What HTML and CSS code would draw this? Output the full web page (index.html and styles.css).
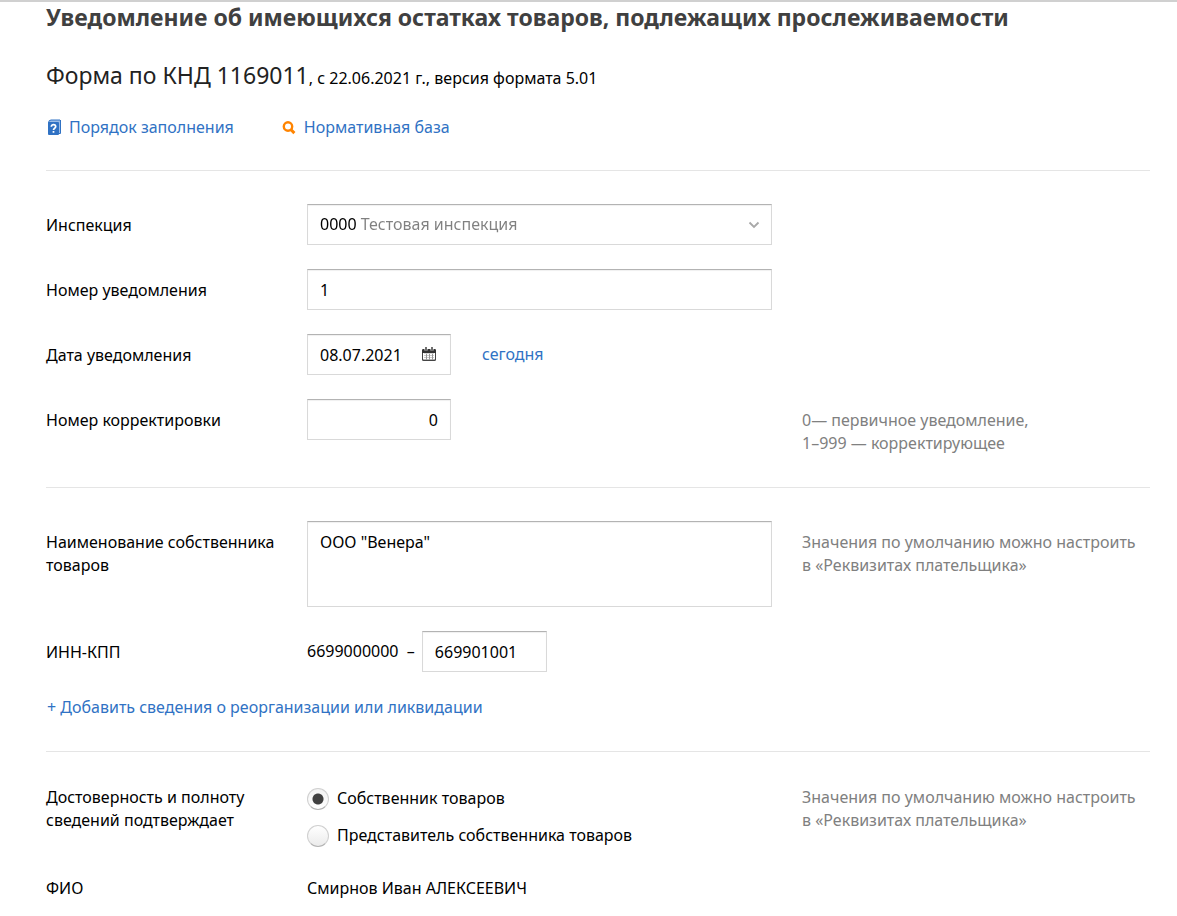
FILE: index.html
```html
<!DOCTYPE html>
<html lang="ru">
<head>
  <meta charset="utf-8">
  <title>Уведомление об остатках товаров</title>
  <link rel="stylesheet" href="styles.css">
</head>
<body>
  <main class="page">
    <header class="header">
      <h1>Уведомление об имеющихся остатках товаров, подлежащих прослеживаемости</h1>
      <p class="form-info"><span class="form-name">Форма по КНД 1169011</span>, с 22.06.2021 г., версия формата 5.01</p>
      <nav class="help-links">
        <a href="#">
          <svg width="16" height="18" viewBox="0 0 16 18">
            <path d="M4 1h11v13h-2V4H2.500z" fill="#9dbde6"/>
            <path d="M14.500 1v13.500h-1.500" fill="none" stroke="#3072c4"/>
            <rect x="2" y="3" width="11" height="13" rx="1" fill="#3072c4"/>
            <path d="M2.500 4Q2.500 1 5 1h9" fill="none" stroke="#3072c4"/>
            <path d="M5.300 7.800c0-2.800 4.400-2.800 4.400 0 0 1.500-2.200 1.500-2.200 3.200M7.500 12v1.800" fill="none" stroke="#fff" stroke-width="1.700"/>
          </svg>
          Порядок заполнения
        </a>
        <a href="#">
          <svg width="16" height="18" viewBox="0 0 16 18">
            <circle cx="7" cy="7.500" r="4.200" fill="none" stroke="#ff8400" stroke-width="2.400"/>
            <path d="M9.800 10.500l3.600 3.600" stroke="#ff8400" stroke-width="3"/>
          </svg>
          Нормативная база
        </a>
      </nav>
    </header>

    <form>
      <section class="section">
        <div class="row">
          <label class="label" for="inspection">Инспекция</label>
          <div class="field select-box">
            <select id="inspection">
              <option>0000 Тестовая инспекция</option>
            </select>
            <svg class="arrow" width="12" height="8" viewBox="0 0 12 8">
              <path d="M1.500 1.500L6 6l4.500-4.500" fill="none" stroke="#a8a8a8" stroke-width="1.800"/>
            </svg>
          </div>
        </div>
        <div class="row">
          <label class="label" for="number">Номер уведомления</label>
          <div class="field">
            <input class="input" type="text" id="number" value="1">
          </div>
        </div>
        <div class="row">
          <label class="label" for="date">Дата уведомления</label>
          <div class="field inline">
            <div class="date-box">
              <input class="input" type="text" id="date" value="08.07.2021">
              <button class="calendar" type="button" aria-label="Календарь">
                <svg width="14" height="14" viewBox="0 0 14 14">
                  <rect y="2" width="14" height="12" rx="1.500" fill="#444"/>
                  <path d="M0 6V3.500Q0 2 1.500 2h11Q14 2 14 3.500V6z" fill="#333"/>
                  <path d="M4 0v3.500M10 0v3.500" stroke="#fff" stroke-width="3"/>
                  <path d="M4 0v3.500M10 0v3.500" stroke="#333" stroke-width="1.400"/>
                  <path d="M1 6h12v6.500H1z" fill="#fff"/>
                  <path d="M2 7.500h10M2 9.500h10M2 11.500h10" stroke="#999" stroke-width="2"/>
                  <path d="M2 7.500h10M2 9.500h10M2 11.500h10" stroke="#fff" stroke-width="1.300" stroke-dasharray="2 1"/>
                </svg>
              </button>
            </div>
            <a class="today" href="#">сегодня</a>
          </div>
        </div>
        <div class="row">
          <label class="label" for="correction">Номер корректировки</label>
          <div class="field">
            <input class="input correction" type="text" id="correction" value="0">
          </div>
          <p class="hint">0— первичное уведомление,<br>1–999 — корректирующее</p>
        </div>
      </section>

      <section class="section">
        <div class="row">
          <label class="label" for="owner">Наименование собственника товаров</label>
          <div class="field">
            <textarea class="input" id="owner">ООО "Венера"</textarea>
          </div>
          <p class="hint">Значения по умолчанию можно настроить в&nbsp;«Реквизитах плательщика»</p>
        </div>
        <div class="row">
          <label class="label" for="kpp">ИНН-КПП</label>
          <div class="field inline">
            <span class="inn">6699000000 &nbsp;–</span>
            <input class="input kpp" type="text" id="kpp" value="669901001">
          </div>
        </div>
        <a class="add-link" href="#">+ Добавить сведения о реорганизации или ликвидации</a>
      </section>

      <section class="section signer">
        <div class="row" role="radiogroup" aria-labelledby="signer">
          <span class="label" id="signer">Достоверность и полноту сведений подтверждает</span>
          <div class="field radios">
            <label><input type="radio" name="signer" checked>Собственник товаров</label>
            <label><input type="radio" name="signer">Представитель собственника товаров</label>
          </div>
          <p class="hint">Значения по умолчанию можно настроить в&nbsp;«Реквизитах плательщика»</p>
        </div>
        <div class="row">
          <span class="label">ФИО</span>
          <span class="field value">Смирнов Иван АЛЕКСЕЕВИЧ</span>
        </div>
      </section>
    </form>
  </main>
</body>
</html>
```
FILE: styles.css
```css
* {
  box-sizing: border-box;
}

body {
  margin: 0;
  border-top: 2px solid #d0d0d0;
  background: #fff;
  color: #000;
  font: 16px/23px "Segoe UI", "Noto Sans", sans-serif;
}

.page {
  padding: 0 27px 0 46px;
}

h1 {
  margin: 0;
  color: #404040;
  font-size: 23px;
  line-height: 30px;
}

.form-info {
  margin: 27px 0 0;
  line-height: 32px;
}

.form-name {
  color: #222;
  font-size: 23px;
}

a {
  color: #3072c4;
  text-decoration: none;
}

a:hover {
  text-decoration: underline;
}

.help-links {
  display: flex;
  gap: 47px;
  padding: 22px 0 31px;
}

.help-links a {
  display: flex;
  align-items: center;
  gap: 7px;
}

/* Form sections */
.section {
  display: flex;
  flex-direction: column;
  gap: 24px;
  padding: 33px 0 32px;
  border-top: 1px solid #e5e5e5;
}

.row {
  display: grid;
  grid-template-columns: 231px 465px 1fr;
  column-gap: 30px;
}

.label,
.hint,
.value {
  margin: 0;
  padding-top: 10px;
}

.hint {
  color: #808080;
}

.inline {
  display: flex;
  align-items: center;
}

/* Inputs */
.input,
.select-box {
  display: block;
  width: 100%;
  height: 41px;
  border: 1px solid #d9d9d9;
  border-top-color: #b3b3b3;
  border-radius: 0;
  background: #fff;
  box-shadow: inset 0 1px 1px #f0f0f0;
  color: #000;
  font: inherit;
}

.input {
  padding: 0 12px;
}

.select-box {
  position: relative;
}

/* The code is black, the name after it is grey */
select {
  width: 100%;
  height: 39px;
  padding: 0 12px;
  border: none;
  appearance: none;
  background: linear-gradient(to right, #000 51px, #808080 51px);
  -webkit-background-clip: text;
  background-clip: text;
  color: transparent;
  font: inherit;
}

option {
  color: #000;
}

.arrow {
  position: absolute;
  top: 16px;
  right: 11px;
  pointer-events: none;
}

textarea.input {
  height: 86px;
  padding: 9px 12px;
  resize: none;
}

.date-box {
  position: relative;
  width: 144px;
}

.calendar {
  position: absolute;
  top: 13px;
  right: 15px;
  width: 14px;
  height: 14px;
  padding: 0;
  border: none;
  background: none;
  cursor: pointer;
}

.calendar svg {
  display: block;
}

.today {
  margin-left: 31px;
}

.correction {
  width: 144px;
  text-align: right;
}

.inn {
  margin-right: 7px;
}

.kpp {
  width: 125px;
}

.add-link {
  align-self: flex-start;
  padding-left: 1px;
}

/* Radio buttons */
.signer {
  gap: 20px;
  padding-top: 24px;
}

.radios {
  display: flex;
  flex-direction: column;
  gap: 14px;
  padding-top: 11px;
}

.radios label {
  display: flex;
  align-items: center;
  gap: 8px;
}

.radios input {
  width: 22px;
  height: 22px;
  margin: 0;
  border: 1px solid #d0d0d0;
  border-bottom-color: #b3b3b3;
  border-radius: 50%;
  appearance: none;
  background: linear-gradient(#fff, #ebebeb);
}

.radios input:checked {
  background: radial-gradient(circle, #404040 5px, transparent 6px), linear-gradient(#f2f2f2, #fff);
}
```
